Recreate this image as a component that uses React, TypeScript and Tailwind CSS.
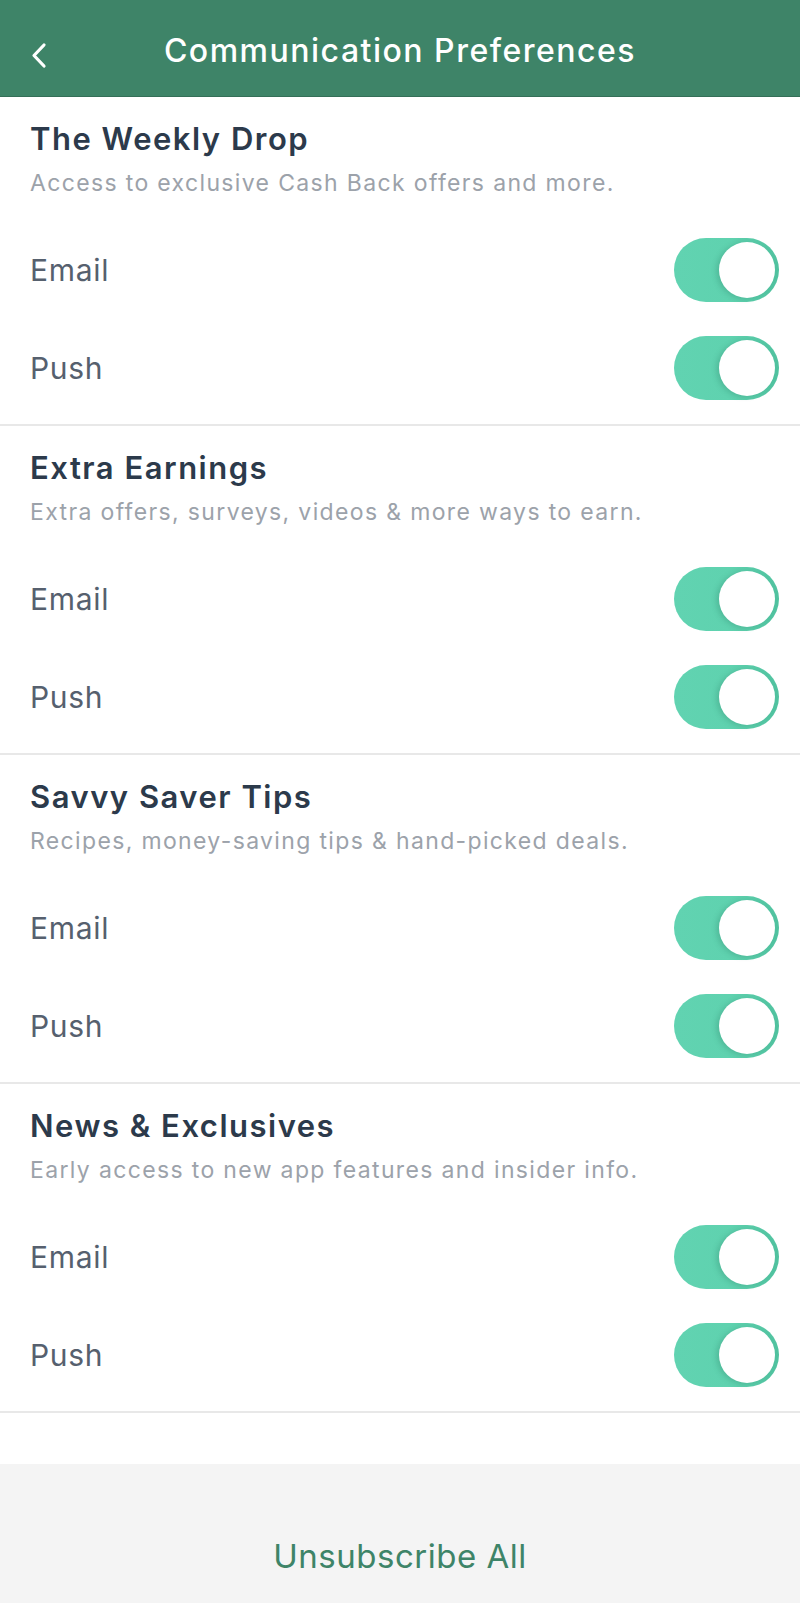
import React, { useState } from 'react';

type Section = {
  id: string;
  title: string;
  subtitle: string;
};

const SECTIONS: Section[] = [
  { id: 'weekly', title: 'The Weekly Drop', subtitle: 'Access to exclusive Cash Back offers and more.' },
  { id: 'extra', title: 'Extra Earnings', subtitle: 'Extra offers, surveys, videos & more ways to earn.' },
  { id: 'savvy', title: 'Savvy Saver Tips', subtitle: 'Recipes, money-saving tips & hand-picked deals.' },
  { id: 'news', title: 'News & Exclusives', subtitle: 'Early access to new app features and insider info.' },
];

function Toggle({ on, onChange }: { on: boolean; onChange: () => void }) {
  return (
    <button
      onClick={onChange}
      className={`relative flex h-[64px] w-[105px] shrink-0 items-center rounded-full px-[4px] ${
        on
          ? 'justify-end bg-[linear-gradient(90deg,#61d3b1_0%,#5fd2af_55%,#50c29f_100%)]'
          : 'justify-start bg-[#d5d9de]'
      }`}
    >
      <span className="block h-[56px] w-[56px] rounded-full bg-white shadow-[-3px_1px_5px_rgba(40,120,95,0.25)]" />
    </button>
  );
}

export default function App() {
  const [prefs, setPrefs] = useState<Record<string, boolean>>(() => {
    const p: Record<string, boolean> = {};
    SECTIONS.forEach((s) => {
      p[`${s.id}-email`] = true;
      p[`${s.id}-push`] = true;
    });
    return p;
  });

  const flip = (key: string) => setPrefs({ ...prefs, [key]: !prefs[key] });

  return (
    <div className="flex min-h-[1603px] w-[800px] flex-col bg-white font-['Inter','Noto_Sans',sans-serif]">
      <div className="relative flex h-[97px] items-center justify-center border-b border-[#356f58] bg-[#3e8468]">
        <button className="absolute left-[26px] top-[35px] p-1">
          <svg width="22" height="30" viewBox="0 0 22 30" fill="none">
            <polyline points="14,6 4,16.5 14,27" stroke="white" strokeWidth="3.2" strokeLinecap="round" strokeLinejoin="round" />
          </svg>
        </button>
        <h1 className="mt-[6px] text-[32px] font-medium tracking-[1.5px] text-white">Communication Preferences</h1>
      </div>

      {SECTIONS.map((s) => (
        <div key={s.id} className="border-b-2 border-[#e8e8e8] pl-[30px] pr-[21px] pt-[24px] pb-[7px]">
          <h2 className="text-[31px] font-semibold leading-[36px] tracking-[1.5px] text-[#2c3a4b]">{s.title}</h2>
          <p className="mt-[12px] text-[23px] leading-[28px] tracking-[1.35px] text-[#9ca2aa]">{s.subtitle}</p>
          <div className="mt-[24px]">
            {(['Email', 'Push'] as const).map((ch) => (
              <div key={ch} className="flex h-[98px] items-center justify-between">
                <span className="text-[30px] leading-[36px] tracking-[0.7px] text-[#56606e]">{ch}</span>
                <Toggle on={prefs[`${s.id}-${ch.toLowerCase()}`]} onChange={() => flip(`${s.id}-${ch.toLowerCase()}`)} />
              </div>
            ))}
          </div>
        </div>
      ))}

      <div className="h-[51px]" />

      <div className="flex flex-1 justify-center bg-[#f4f4f4] pt-[72px]">
        <button className="h-[40px] text-[33px] leading-[40px] tracking-[0.5px] text-[#3e8468]">Unsubscribe All</button>
      </div>
    </div>
  );
}
